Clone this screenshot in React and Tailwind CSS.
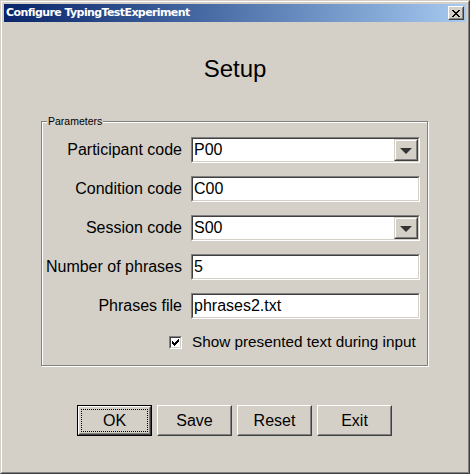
import React from "react";

const font = { fontFamily: '"Liberation Sans", Arial, sans-serif' };

function Sunken({ children, className = "" }) {
  return (
    <div className={"border border-t-[#808080] border-l-[#808080] border-b-white border-r-white " + className}>
      <div className="h-full border border-t-[#404040] border-l-[#404040] border-b-[#d4d0c8] border-r-[#d4d0c8] bg-white flex items-stretch">
        {children}
      </div>
    </div>
  );
}

function TextField({ value, combo }) {
  return (
    <Sunken className="h-[26px] w-[229px]">
      <div className="flex-1 pl-[1px] text-[16px] leading-[22px] text-black">{value}</div>
      {combo && (
        <div className="w-[24px] border border-t-[#d4d0c8] border-l-[#d4d0c8] border-b-[#404040] border-r-[#404040]">
          <div className="h-full border border-t-white border-l-white border-b-[#808080] border-r-[#808080] bg-[#d4d0c8] flex items-center justify-center">
            <div className="w-0 h-0 border-l-[6px] border-r-[6px] border-t-[6px] border-l-transparent border-r-transparent border-t-[#333333] mt-[1px]" />
          </div>
        </div>
      )}
    </Sunken>
  );
}

function Label({ children }) {
  return (
    <div className="h-[26px] flex items-center justify-end text-[16px] leading-[22px] text-black whitespace-nowrap">
      {children}
    </div>
  );
}

function Button({ children, isDefault }) {
  if (isDefault) {
    return (
      <div className="w-[75px] h-[31px] border border-black">
        <div className="h-full border border-t-white border-l-white border-b-[#404040] border-r-[#404040]">
          <div className="h-full border border-t-[#d4d0c8] border-l-[#d4d0c8] border-b-[#808080] border-r-[#808080] bg-[#d4d0c8] p-[1px]">
            <div className="h-full border border-dotted border-black flex items-center justify-center text-[16px] text-black">
              {children}
            </div>
          </div>
        </div>
      </div>
    );
  }
  return (
    <div className="w-[75px] h-[31px] border border-t-white border-l-white border-b-[#404040] border-r-[#404040]">
      <div className="h-full border border-t-[#d4d0c8] border-l-[#d4d0c8] border-b-[#808080] border-r-[#808080] bg-[#d4d0c8] flex items-center justify-center text-[16px] text-black">
        {children}
      </div>
    </div>
  );
}

export default function App() {
  return (
    <div
      className="w-[470px] h-[474px] border border-t-[#d4d0c8] border-l-[#d4d0c8] border-b-[#404040] border-r-[#404040] bg-[#d4d0c8]"
      style={font}
    >
      <div className="h-full border border-t-white border-l-white border-b-[#808080] border-r-[#808080] p-[2px] flex flex-col">
        {/* Title bar */}
        <div className="h-[18px] flex items-center bg-gradient-to-r from-[#0a246a] to-[#a6caf0] pl-[2px] pr-[2px]">
          <div
            className="flex-1 text-white font-bold text-[11px] leading-[18px] whitespace-nowrap"
            style={{ fontFamily: '"DejaVu Sans", Verdana, sans-serif', letterSpacing: "-0.6px" }}
          >
            Configure TypingTestExperiment
          </div>
          <div className="w-[16px] h-[14px] border border-t-white border-l-white border-b-[#404040] border-r-[#404040]">
            <div className="h-full border border-t-[#d4d0c8] border-l-[#d4d0c8] border-b-[#808080] border-r-[#808080] bg-[#d4d0c8] flex items-center justify-center">
              <svg width="8" height="7" viewBox="0 0 8 7" shapeRendering="crispEdges">
                <path d="M0 0h2v1H0zM6 0h2v1H6zM1 1h2v1H1zM5 1h2v1H5zM2 2h4v1H2zM3 3h2v1H3zM2 4h4v1H2zM1 5h2v1H1zM5 5h2v1H5zM0 6h2v1H0zM6 6h2v1H6z" fill="#000" />
              </svg>
            </div>
          </div>
        </div>

        {/* Heading */}
        <div className="mt-[33px] h-[28px] text-[24px] leading-[28px] text-center text-black">Setup</div>

        {/* Parameters group */}
        <fieldset className="mt-[32px] ml-[37px] w-[387px] h-[251px] border border-[#808080] shadow-[inset_1px_1px_0_#ffffff,1px_1px_0_#ffffff]">
          <legend className="ml-[5px] px-[1px] text-[10.5px] leading-[13px] text-black bg-[#d4d0c8]">Parameters</legend>
          <div className="pt-[9px] grid grid-cols-[140px_229px] gap-x-[9px] gap-y-[13px]">
            <Label>Participant code</Label>
            <TextField value="P00" combo />
            <Label>Condition code</Label>
            <TextField value="C00" />
            <Label>Session code</Label>
            <TextField value="S00" combo />
            <Label>Number of phrases</Label>
            <TextField value="5" />
            <Label>Phrases file</Label>
            <TextField value="phrases2.txt" />
          </div>
          <div className="mt-[10px] grid grid-cols-[140px_229px] gap-x-[9px] h-[26px]">
            <div className="flex items-center justify-end">
              <Sunken className="w-[13px] h-[13px]">
                <div className="flex-1 flex items-center justify-center">
                  <svg width="7" height="7" viewBox="0 0 7 7" shapeRendering="crispEdges">
                    <path d="M6 0h1v1H6zM5 1h2v1H5zM0 2h1v1H0zM4 2h3v1H4zM0 3h2v1H0zM3 3h3v1H3zM0 4h5v1H0zM1 5h3v1H1zM2 6h1v1H2z" fill="#000" />
                  </svg>
                </div>
              </Sunken>
            </div>
            <div className="pl-[1px] flex items-center text-[15.3px] leading-[22px] text-black whitespace-nowrap">
              Show presented text during input
            </div>
          </div>
        </fieldset>

        {/* Buttons */}
        <div className="mt-[39px] pl-[73px] flex gap-[5px]">
          <Button isDefault>OK</Button>
          <Button>Save</Button>
          <Button>Reset</Button>
          <Button>Exit</Button>
        </div>
      </div>
    </div>
  );
}
